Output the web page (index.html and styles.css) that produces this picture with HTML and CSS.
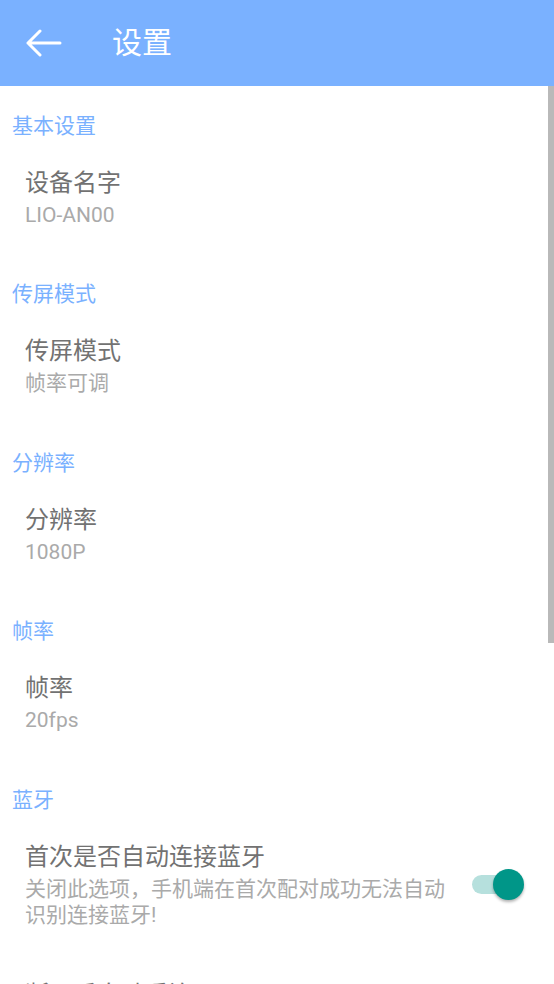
FILE: index.html
```html
<!DOCTYPE html>
<html lang="zh-CN">
  <head>
    <meta charset="UTF-8" />
    <title>设置</title>
    <link rel="stylesheet" href="styles.css">
  </head>
  <body>
    <div class="toolbar">
      <svg class="back" width="36" height="28" viewBox="0 0 36 28">
        <path d="M2 14H34M14 2L2 14L14 26" fill="none" stroke="#fff" stroke-width="3" stroke-linecap="round" stroke-linejoin="round" />
      </svg>
      <h1>设置</h1>
    </div>

    <div class="list">
      <div class="group">
        <div class="group-title">基本设置</div>
        <div class="item">
          <div class="text">
            <div class="title">设备名字</div>
            <div class="summary">LIO-AN00</div>
          </div>
        </div>
      </div>

      <div class="group">
        <div class="group-title">传屏模式</div>
        <div class="item">
          <div class="text">
            <div class="title">传屏模式</div>
            <div class="summary">帧率可调</div>
          </div>
        </div>
      </div>

      <div class="group">
        <div class="group-title">分辨率</div>
        <div class="item">
          <div class="text">
            <div class="title">分辨率</div>
            <div class="summary">1080P</div>
          </div>
        </div>
      </div>

      <div class="group">
        <div class="group-title">帧率</div>
        <div class="item">
          <div class="text">
            <div class="title">帧率</div>
            <div class="summary">20fps</div>
          </div>
        </div>
      </div>

      <div class="group">
        <div class="group-title">蓝牙</div>
        <div class="item">
          <div class="text">
            <div class="title">首次是否自动连接蓝牙</div>
            <div class="summary">关闭此选项，手机端在首次配对成功无法自动识别连接蓝牙!</div>
          </div>
          <div class="switch on">
            <span class="track"></span>
            <span class="thumb"></span>
          </div>
        </div>
        <div class="item next">
          <div class="text">
            <div class="title">断开后自动重连</div>
            <div class="summary">蓝牙断开后自动尝试重新连接</div>
          </div>
        </div>
      </div>
    </div>

    <!-- 滚动条 -->
    <div class="scrollbar"></div>
  </body>
</html>
```

FILE: styles.css
```css
html,
body {
  margin: 0;
  padding: 0;
  height: 984px;
  overflow: hidden;
  background-color: #fff;
  font-family: Roboto, "Noto Sans CJK SC", sans-serif;
}

body {
  position: relative;
}

.toolbar {
  display: flex;
  align-items: center;
  height: 86px;
  background-color: #7ab1ff;
}

.toolbar .back {
  display: block;
  margin-left: 26px;
}

.toolbar h1 {
  margin: 0 0 0 50px;
  font-size: 30px;
  font-weight: normal;
  line-height: 40px;
  color: #fff;
}

.list {
  padding-top: 1px;
}

.group {
  padding-top: 23.5px;
}

.group-title {
  padding-left: 12px;
  font-size: 21px;
  line-height: 30px;
  color: #7ab1ff;
}

.item {
  display: flex;
  align-items: center;
  padding: 26px 30px 28px 25px;
}

.item.next {
  margin-top: -3px;
}

.item .text {
  flex: 1;
  min-width: 0;
}

.item .title {
  font-size: 24px;
  line-height: 32px;
  color: #727272;
}

.item .summary {
  margin-top: 3px;
  font-size: 21px;
  line-height: 26px;
  color: #aaa;
}

.switch {
  position: relative;
  flex: none;
  width: 52px;
  height: 32px;
  margin-left: 12px;
}

.switch .track {
  position: absolute;
  left: 0;
  top: 7px;
  width: 46px;
  height: 19px;
  border-radius: 10px;
  background-color: #b6e0dd;
}

.switch .thumb {
  position: absolute;
  right: 0;
  top: 1px;
  width: 31px;
  height: 31px;
  border-radius: 50%;
  background-color: #009688;
  box-shadow: 0 2px 3px rgba(0, 0, 0, 0.3);
}

.scrollbar {
  position: absolute;
  right: 0;
  top: 86px;
  width: 6px;
  height: 557px;
  background-color: #b9b9b9;
}
```
